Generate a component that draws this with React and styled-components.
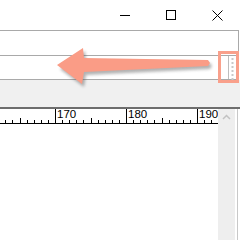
import React from 'react';
import styled, { createGlobalStyle } from 'styled-components';

const GlobalStyle = createGlobalStyle`
    html, body {
        margin: 0;
        padding: 0;
        background: #ffffff;
        overflow: hidden;
        font-family: "Liberation Sans", Arial, sans-serif;
    }
`;

const Window = styled.div`
    position: relative;
    width: 240px;
    height: 240px;
    display: flex;
    flex-direction: column;
    background: #ffffff;
    overflow: hidden;
`;

const TitleBar = styled.div`
    height: 30px;
    display: flex;
    justify-content: flex-end;
`;

const CaptionButton = styled.div`
    width: 46px;
    height: 30px;
    display: flex;
    align-items: center;
    justify-content: center;
    svg {
        display: block;
    }
`;

const ToolbarFrame = styled.div`
    width: 238px;
    border-top: 1px solid #a9a9a9;
    border-right: 1px solid #a9a9a9;
    border-bottom: 1px solid #a9a9a9;
    display: flex;
    flex-direction: column;
`;

const ToolbarRow = styled.div`
    height: ${props => props.h}px;
    background: #ffffff;
    border-bottom: ${props => props.divided ? '1px solid #a9a9a9' : 'none'};
`;

const GrayStrip = styled.div`
    height: 27px;
    background: #f0f0f0;
`;

const RulerArea = styled.div`
    flex: 1;
    display: flex;
    border-top: 2px solid #6d6d6d;
`;

const RulerColumn = styled.div`
    width: 218px;
    background: #ffffff;
`;

const ScrollColumn = styled.div`
    width: 17px;
    background: #eeeeee;
    display: flex;
    justify-content: center;
    padding-top: 5px;
    box-sizing: border-box;
`;

const EdgeColumn = styled.div`
    width: 5px;
    display: flex;
    justify-content: center;
    &::before {
        content: '';
        width: 1px;
        background: #c8c8c8;
    }
`;

const Overlay = styled.svg`
    position: absolute;
    left: 0;
    top: 0;
    pointer-events: none;
`;

const Ruler = () => {
    const step = 7.1;
    const ticks = [];
    const labels = [];
    for (let k = -8; k <= 24; k++) {
        const x = Math.round(55 + k * step) + 0.5;
        if (x < 0 || x > 218) continue;
        const unit = ((k % 10) + 10) % 10;
        const top = unit === 0 ? 0 : unit === 5 ? 9 : 11;
        ticks.push(<line key={k} x1={x} x2={x} y1={top} y2={14} stroke="#000" strokeWidth="1" />);
        if (unit === 0) {
            labels.push(
                <text key={'t' + k} x={x + 1.5} y={9} fontSize="11.5" fontFamily="Liberation Sans, Arial, sans-serif" fill="#000">
                    {170 + k}
                </text>
            );
        }
    }
    return (
        <svg width="218" height="15">
            {labels}
            {ticks}
            <line x1="0" x2="218" y1="14.5" y2="14.5" stroke="#000" strokeWidth="1" />
        </svg>
    );
};

export default function App() {
    return (
        <Window>
            <GlobalStyle />
            <TitleBar>
                <CaptionButton>
                    <svg width="10" height="10"><line x1="0" x2="10" y1="5.5" y2="5.5" stroke="#000" /></svg>
                </CaptionButton>
                <CaptionButton>
                    <svg width="10" height="10"><rect x="0.5" y="0.5" width="9" height="9" fill="none" stroke="#000" /></svg>
                </CaptionButton>
                <CaptionButton>
                    <svg width="11" height="11"><path d="M0.5 0.5 L10.5 10.5 M10.5 0.5 L0.5 10.5" stroke="#000" strokeWidth="1" /></svg>
                </CaptionButton>
            </TitleBar>
            <ToolbarFrame>
                <ToolbarRow h={24} divided />
                <ToolbarRow h={23} />
            </ToolbarFrame>
            <GrayStrip />
            <RulerArea>
                <RulerColumn>
                    <Ruler />
                </RulerColumn>
                <ScrollColumn>
                    <svg width="9" height="6"><path d="M1 5 L4.5 1.5 L8 5" fill="none" stroke="#c2c2c2" strokeWidth="1.5" /></svg>
                </ScrollColumn>
                <EdgeColumn />
            </RulerArea>
            <Overlay width="240" height="240">
                <defs>
                    <filter id="shade" x="-10%" y="-30%" width="130%" height="180%">
                        <feGaussianBlur stdDeviation="1.5" />
                    </filter>
                </defs>
                <polygon
                    points="58,66 83,48 84,58 208,60 210,63 208,66 84,72 82,84"
                    fill="#555" opacity="0.45" transform="translate(2,3)" filter="url(#shade)"
                />
                <polygon
                    points="57,65 83,48 84,58 208,60 210,63 208,66 84,72 82,84"
                    fill="#fa9c86"
                />
                <line x1="228.5" x2="228.5" y1="56" y2="79" stroke="#bdbdbd" />
                {[58, 62, 66, 70, 74, 78].map(y => (
                    <rect key={y} x="231.5" y={y} width="2" height="2" fill="#c9c9c9" />
                ))}
                <rect x="219.5" y="52.5" width="18" height="29" fill="none" stroke="#f9a08b" strokeWidth="3" />
            </Overlay>
        </Window>
    );
}
